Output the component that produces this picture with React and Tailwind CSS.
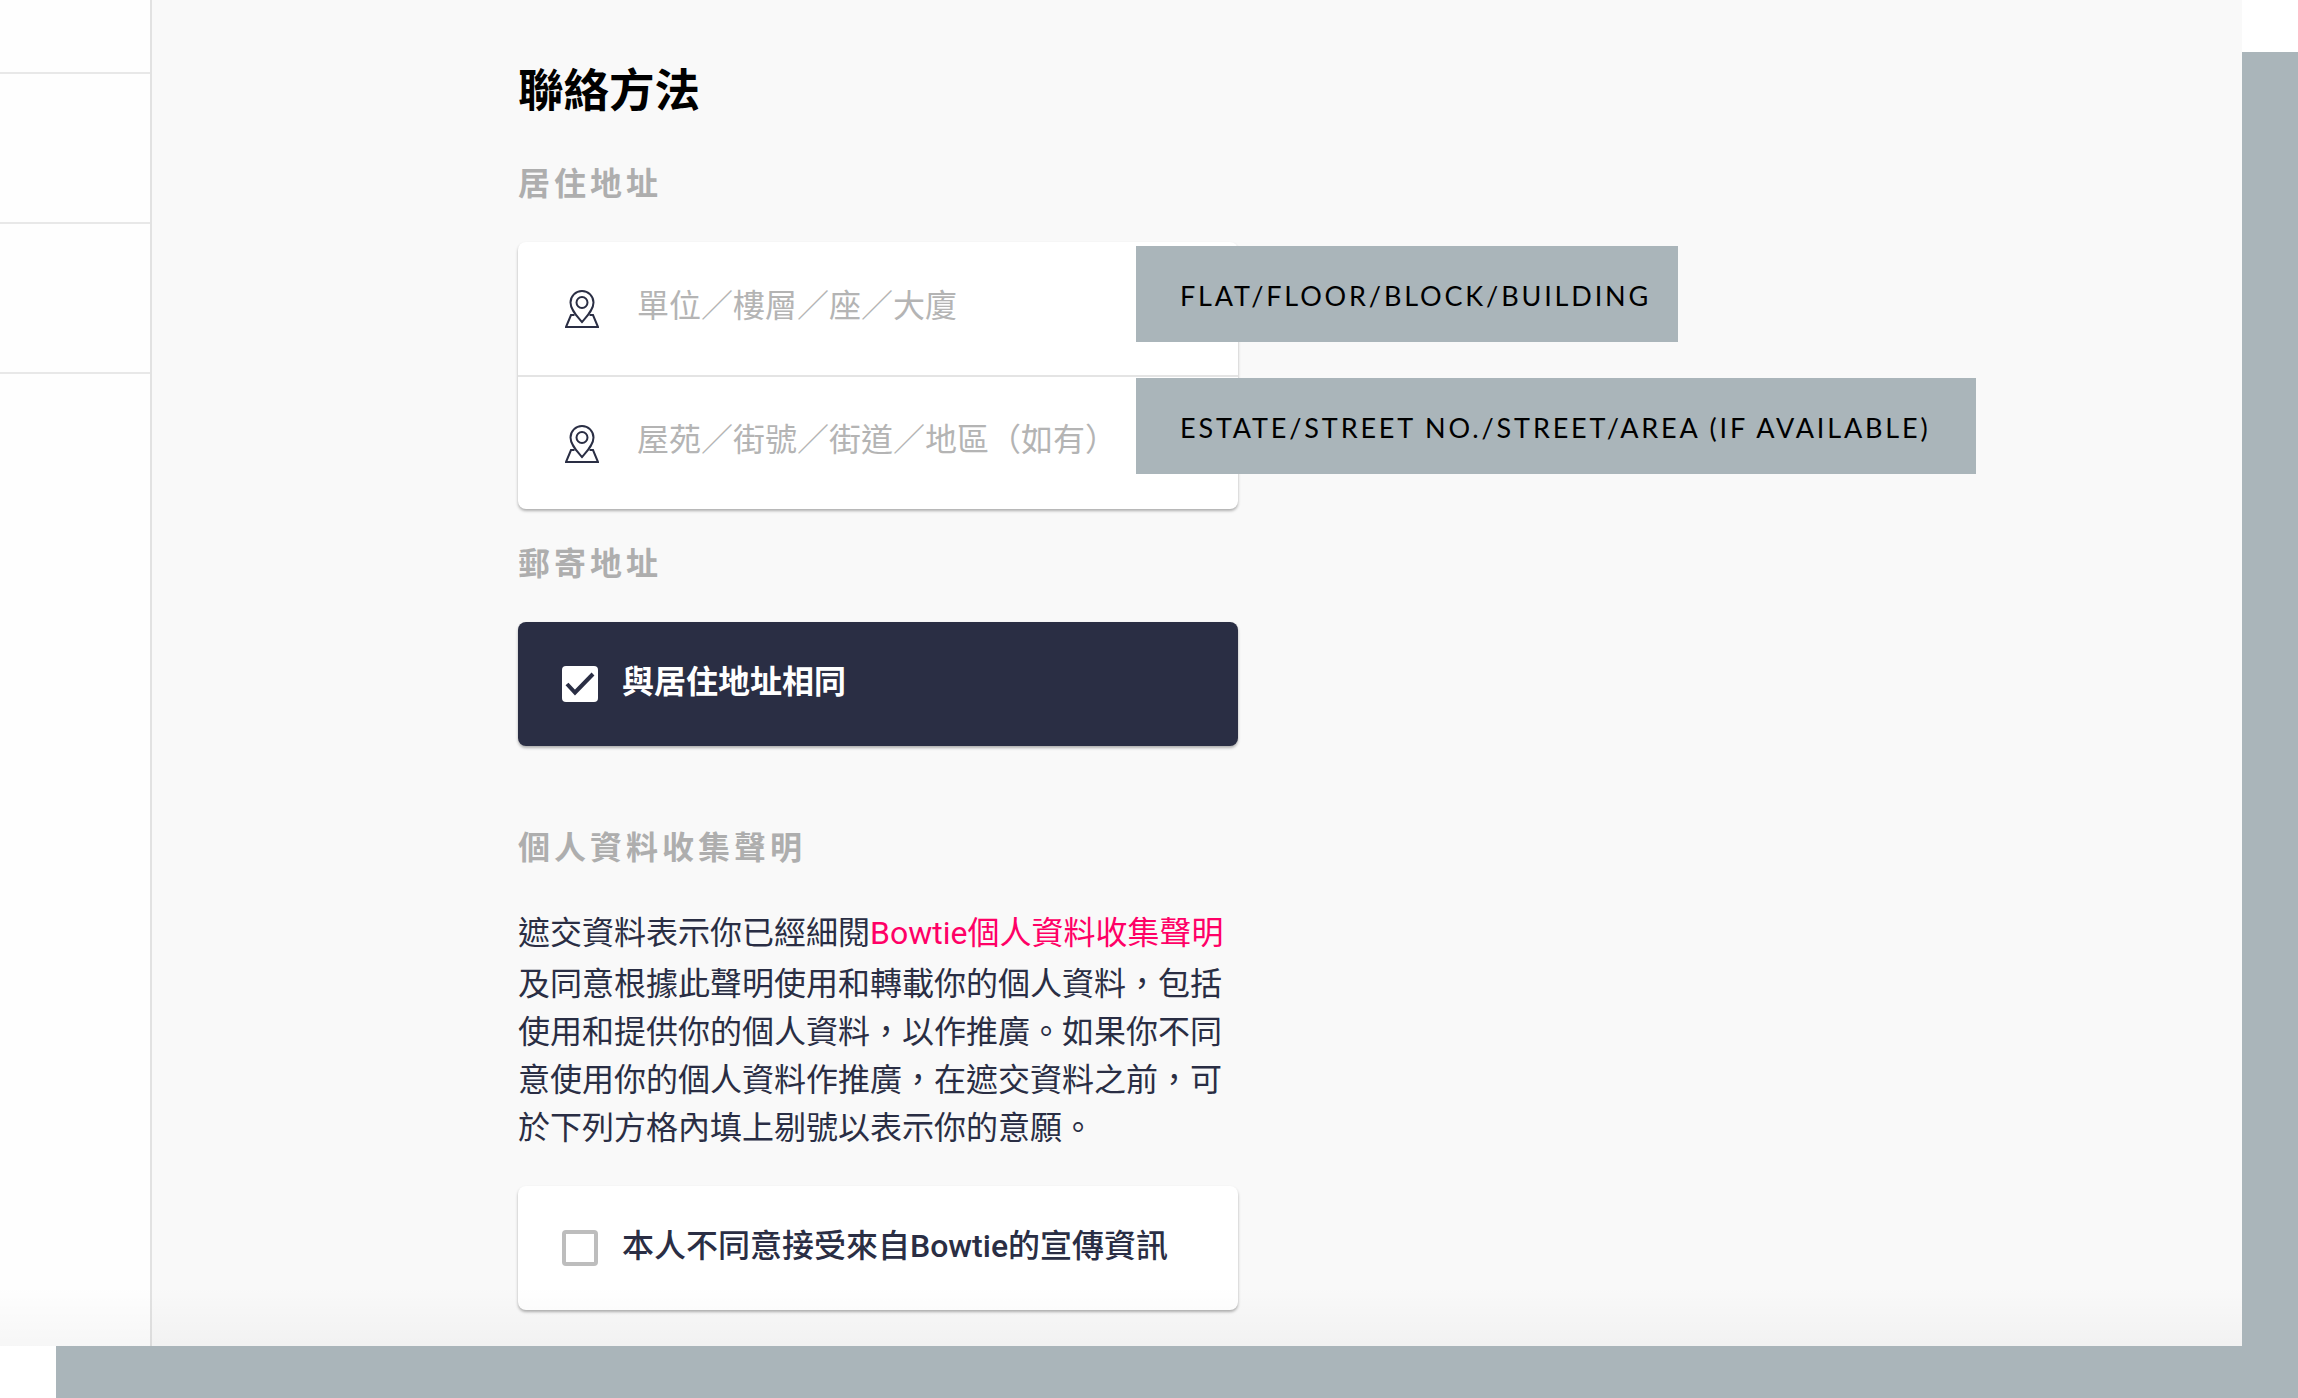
import React from "react";

const cjk = "font-['Roboto','Noto_Sans_CJK_TC',sans-serif]";

const PinIcon = () => (
  <svg width="34" height="38" viewBox="0 0 34 38" fill="none" stroke="#2a2e44" strokeWidth="2" className="shrink-0 mt-[1px]">
    <path d="M17 32 C12 26 5.5 20 5.5 12.5 A11.5 11.5 0 0 1 28.5 12.5 C28.5 20 22 26 17 32 Z" />
    <circle cx="17" cy="12.5" r="5.5" />
    <path d="M9.5 25 H6 L1 37 H33 L28 25 H24.5" />
  </svg>
);

const SectionLabel = ({ children, className = "" }) => (
  <h3 className={`text-[32px] leading-[44px] font-bold tracking-[4px] text-[#aeaeae] ${className}`}>{children}</h3>
);

const AddressRow = ({ placeholder, hint, className = "", hintClass }) => (
  <div className={`relative flex items-center pl-[47px] ${className}`}>
    <PinIcon />
    <span className="ml-[38px] text-[32px] leading-[44px] text-[#b4b4b4] -mt-[6px]">{placeholder}</span>
    <div className={`absolute left-[618px] ${hintClass} h-[96px] flex items-center pl-[44px] pt-[4px] bg-[#aab5ba] text-black font-['Lato',sans-serif] text-[27px] tracking-[2.85px] whitespace-nowrap`}>
      {hint}
    </div>
  </div>
);

const App = () => {
  return (
    <div className={`relative w-full h-screen bg-white overflow-hidden ${cjk}`}>
      <div className="absolute left-[56px] top-[52px] right-0 bottom-0 bg-[#aab5ba]"></div>

      <div className="relative flex w-[2242px] h-[1346px] bg-[#f9f9f9] overflow-hidden">
        <aside className="w-[152px] shrink-0 bg-[#fefefe] border-r-2 border-[#e2e2e2]">
          <div className="h-[74px] border-b-2 border-[#e8e8e8]"></div>
          <div className="h-[150px] border-b-2 border-[#e8e8e8]"></div>
          <div className="h-[150px] border-b-2 border-[#e8e8e8]"></div>
        </aside>

        <main className="flex-1 pl-[366px] pt-[62px]">
          <div className="w-[720px]">
            <h1 className="text-[45.5px] leading-[60px] font-bold text-black">聯絡方法</h1>

            <SectionLabel className="mt-[40px]">居住地址</SectionLabel>

            <div className="mt-[36px] bg-white rounded-lg shadow-[0_2px_3px_rgba(0,0,0,0.3)]">
              <AddressRow placeholder="單位／樓層／座／大廈" hint="FLAT/FLOOR/BLOCK/BUILDING" hintClass="top-[4px] w-[542px]" className="h-[133px]" />
              <div className="h-[2px] bg-[#e4e4e4]"></div>
              <AddressRow placeholder="屋苑／街號／街道／地區（如有）" hint="ESTATE/STREET NO./STREET/AREA (IF AVAILABLE)" hintClass="top-[1px] w-[840px]" className="h-[132px]" />
            </div>

            <SectionLabel className="mt-[33px]">郵寄地址</SectionLabel>

            <label className="mt-[36px] h-[124px] flex items-center pl-[44px] bg-[#2a2e44] rounded-lg shadow-[0_2px_3px_rgba(0,0,0,0.3)]">
              <span className="w-[36px] h-[36px] bg-white rounded-[4px] shrink-0">
                <svg width="36" height="36" viewBox="0 0 36 36" fill="none" stroke="#2a2e44" strokeWidth="4">
                  <path d="M5 18 L13 26.5 L31 8" />
                </svg>
              </span>
              <span className="ml-[24px] text-[32px] leading-[44px] font-bold text-white -mt-[4px]">與居住地址相同</span>
            </label>

            <SectionLabel className="mt-[80px]">個人資料收集聲明</SectionLabel>

            <p className="mt-[36px] text-[32px] leading-[48px] text-[#2a2e44]">
              遮交資料表示你已經細閱<a className="text-[#ff0066] leading-[54px]">Bowtie個人資料收集聲明</a>及同意根據此聲明使用和轉載你的個人資料，包括使用和提供你的個人資料，以作推廣。如果你不同意使用你的個人資料作推廣，在遮交資料之前，可於下列方格內填上剔號以表示你的意願。
            </p>

            <label className="mt-[34px] h-[124px] flex items-center pl-[44px] bg-white rounded-lg shadow-[0_2px_3px_rgba(0,0,0,0.3)]">
              <span className="w-[36px] h-[36px] bg-white rounded-[4px] border-4 border-[#bdbdbd] shrink-0"></span>
              <span className="ml-[24px] text-[32px] leading-[44px] font-medium text-[#2a2e44] -mt-[4px]">本人不同意接受來自Bowtie的宣傳資訊</span>
            </label>
          </div>
        </main>

        <div className="absolute inset-x-0 bottom-0 h-[60px] bg-gradient-to-b from-transparent to-black/[0.03] pointer-events-none"></div>
      </div>
    </div>
  );
};

export default App;
